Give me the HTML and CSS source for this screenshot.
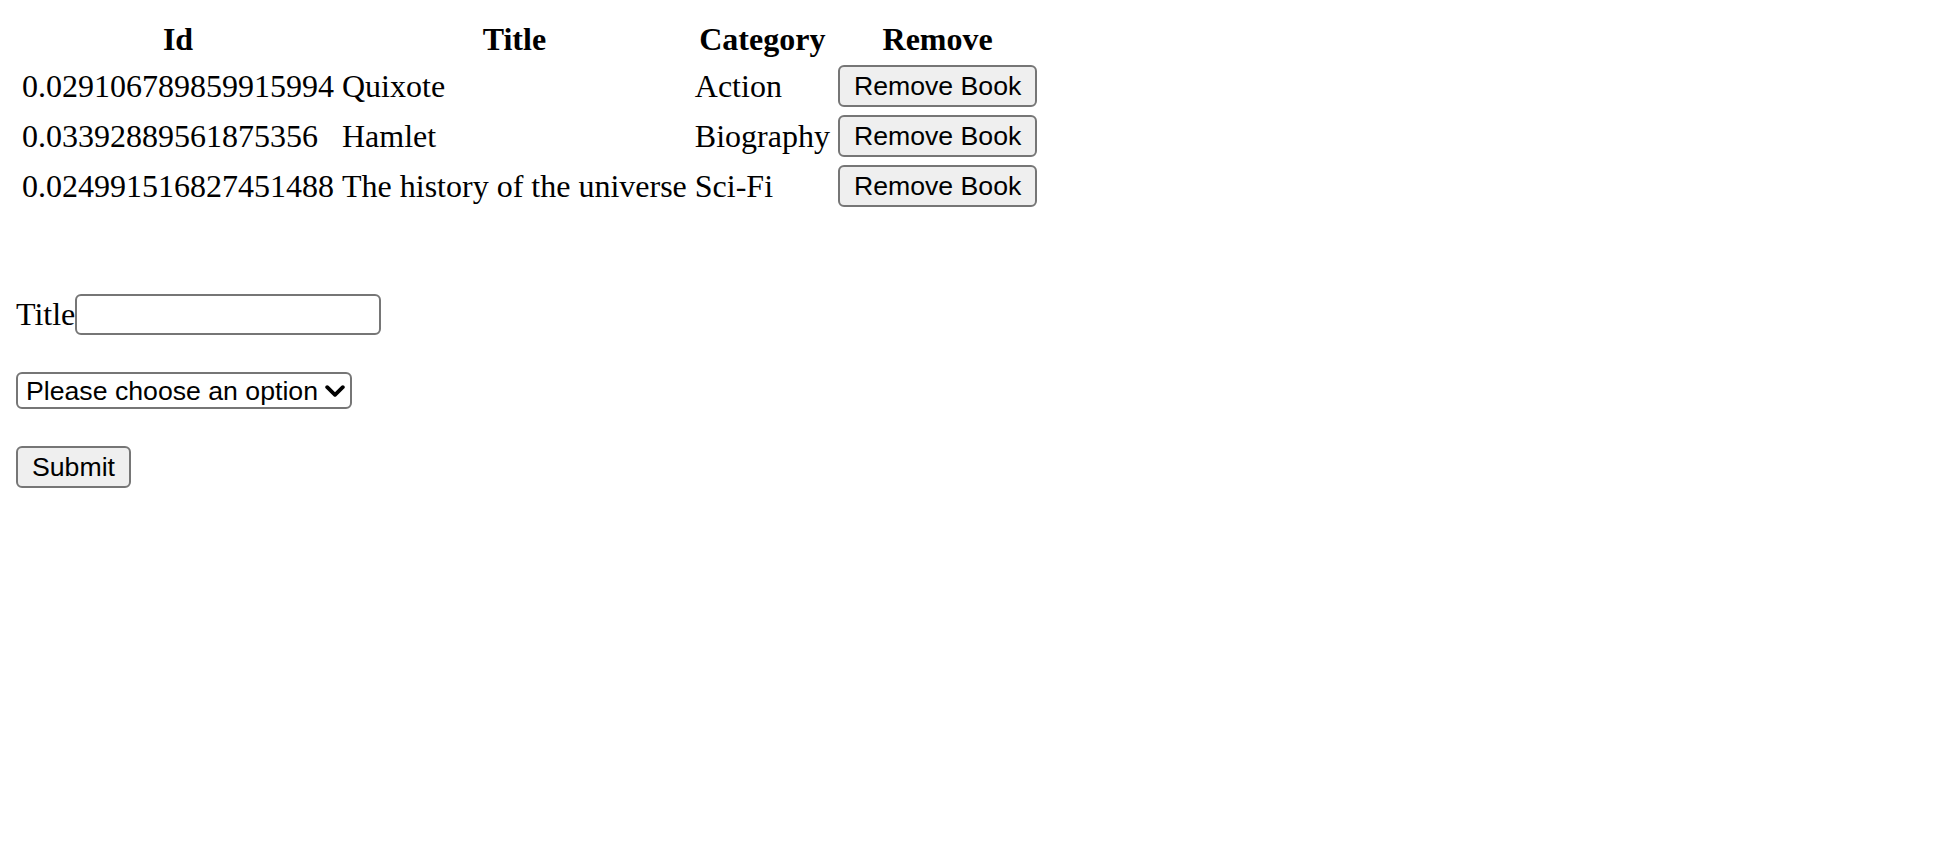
FILE: index.html
```html
<!DOCTYPE html>
<html lang="en">
<head>
<meta charset="utf-8">
<title>Books</title>
<link rel="stylesheet" href="styles.css">
</head>
<body>
<table class="books">
  <thead>
    <tr><th>Id</th><th>Title</th><th>Category</th><th>Remove</th></tr>
  </thead>
  <tbody>
    <tr><td>0.029106789859915994</td><td>Quixote</td><td>Action</td><td><button class="btn" type="button">Remove Book</button></td></tr>
    <tr><td>0.03392889561875356</td><td>Hamlet</td><td>Biography</td><td><button class="btn" type="button">Remove Book</button></td></tr>
    <tr><td>0.024991516827451488</td><td>The history of the universe</td><td>Sci-Fi</td><td><button class="btn" type="button">Remove Book</button></td></tr>
  </tbody>
</table>
<form class="book-form">
  <div class="field"><label for="title" class="label">Title</label><input id="title" class="text-input" type="text"></div>
  <div class="field">
    <span class="select-wrap">
      <select class="select"><option>Please choose an option</option><option>Action</option><option>Biography</option><option>Sci-Fi</option></select>
      <svg class="chevron" viewBox="0 0 10 6" width="10" height="6" aria-hidden="true"><path d="M1.1 1.1 L5 4.9 L8.9 1.1" fill="none" stroke="#000" stroke-width="1.9" stroke-linecap="round" stroke-linejoin="round"/></svg>
    </span>
  </div>
  <div class="field"><button class="btn" type="submit">Submit</button></div>
</form>
</body>
</html>
```

FILE: styles.css
```css
html {
  zoom: 2;
}
body {
  margin: 8px;
  font-family: "Liberation Serif", "Times New Roman", serif;
  font-size: 16px;
  color: #000;
  background: #fff;
}
.books th {
  font-weight: bold;
  line-height: 17.5px;
}
.btn,
.text-input,
.select {
  font-family: "Liberation Sans", Arial, sans-serif;
  font-size: 13.333px;
  color: #000;
}
.btn {
  box-sizing: border-box;
  height: 21px;
  padding: 0 7px;
  background: #efefef;
  border: 1px solid #767676;
  border-radius: 3px;
}
.book-form {
  margin-top: 40.6px;
}
.field {
  display: flex;
  align-items: center;
  margin-bottom: 18.5px;
}
.text-input {
  box-sizing: border-box;
  width: 153px;
  height: 20.5px;
  padding: 1px 2px;
  border: 1px solid #767676;
  border-radius: 3px;
  background: #fff;
}
.select-wrap {
  position: relative;
  display: inline-block;
}
.select {
  -webkit-appearance: none;
  appearance: none;
  box-sizing: border-box;
  display: block;
  width: 168px;
  height: 18.5px;
  padding: 0 12px 0 4px;
  border: 1px solid #767676;
  border-radius: 3px;
  background: #fff;
}
.chevron {
  position: absolute;
  right: 3.5px;
  top: 6.3px;
  width: 10px;
  height: 6px;
  pointer-events: none;
}
```
